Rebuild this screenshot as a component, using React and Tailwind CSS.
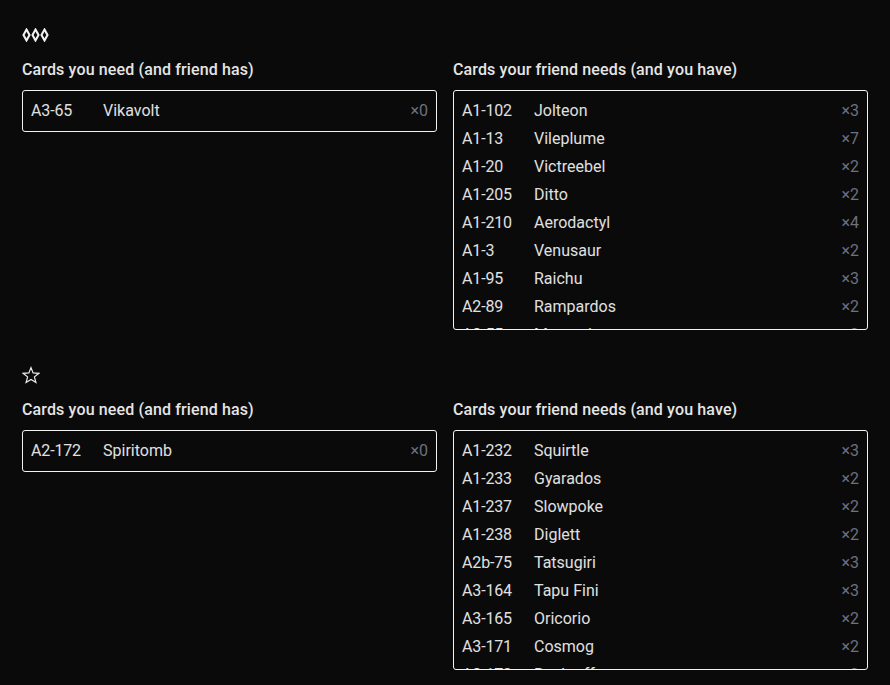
import React from 'react';

const sections = [
  {
    icon: 'diamonds',
    need: [['A3-65', 'Vikavolt', 0]],
    give: [
      ['A1-102', 'Jolteon', 3],
      ['A1-13', 'Vileplume', 7],
      ['A1-20', 'Victreebel', 2],
      ['A1-205', 'Ditto', 2],
      ['A1-210', 'Aerodactyl', 4],
      ['A1-3', 'Venusaur', 2],
      ['A1-95', 'Raichu', 3],
      ['A2-89', 'Rampardos', 2],
      ['A3-55', 'Mareanie', 2],
    ],
  },
  {
    icon: 'star',
    need: [['A2-172', 'Spiritomb', 0]],
    give: [
      ['A1-232', 'Squirtle', 3],
      ['A1-233', 'Gyarados', 2],
      ['A1-237', 'Slowpoke', 2],
      ['A1-238', 'Diglett', 2],
      ['A2b-75', 'Tatsugiri', 3],
      ['A3-164', 'Tapu Fini', 3],
      ['A3-165', 'Oricorio', 2],
      ['A3-171', 'Cosmog', 2],
      ['A3-172', 'Rockruff', 2],
    ],
  },
];

const Diamond = ({ x }) => (
  <path d={`M${x + 4} 1.6 L${x + 7} 7 L${x + 4} 12.4 L${x + 1} 7 Z`} fill="none" stroke="#f2f2f2" strokeWidth="2.1" />
);

const RarityIcon = ({ type }) => {
  if (type === 'diamonds') {
    return (
      <svg width="28" height="14" viewBox="0 0 28 14" className="block">
        <Diamond x={0.5} />
        <Diamond x={9.5} />
        <Diamond x={18.5} />
      </svg>
    );
  }
  return (
    <svg width="18" height="18" viewBox="0 0 18 18" className="block">
      <path d="M9 1.6 L11.1 6.9 L16.9 7.3 L12.4 10.9 L13.9 16.4 L9 13.4 L4.1 16.4 L5.6 10.9 L1.1 7.3 L6.9 6.9 Z" fill="none" stroke="#ededed" strokeWidth="1.2" />
    </svg>
  );
};

const CardList = ({ title, cards, scroll }) => (
  <div>
    <h3 className="text-base font-medium leading-6 tracking-[0.13px] mb-2 text-[#e5e5e5]">{title}</h3>
    <div className={`border border-[#f2f2f2] rounded-[3px] py-[6px] px-2 overflow-hidden ${scroll ? 'h-[240px]' : ''}`}>
      {cards.map(([id, name, count]) => (
        <div key={id} className="flex h-7 items-center leading-6 text-[#e0e0e0]">
          <span className="w-[72px] tracking-[-0.15px]">{id}</span>
          <span className="flex-1">{name}</span>
          <span className="text-[#6b7280]">×{count}</span>
        </div>
      ))}
    </div>
  </div>
);

export default function App() {
  return (
    <div className="h-[685px] overflow-hidden bg-[#0a0a0a] px-[22px] pt-[24px] text-base text-[#e5e5e5] font-['Roboto',sans-serif]">
      {sections.map((s) => (
        <section key={s.icon} className="mb-[34px]">
          <div className="h-[22px] flex items-center">
            <RarityIcon type={s.icon} />
          </div>
          <div className="grid grid-cols-2 gap-4 mt-3">
            <CardList title="Cards you need (and friend has)" cards={s.need} />
            <CardList title="Cards your friend needs (and you have)" cards={s.give} scroll />
          </div>
        </section>
      ))}
    </div>
  );
}
